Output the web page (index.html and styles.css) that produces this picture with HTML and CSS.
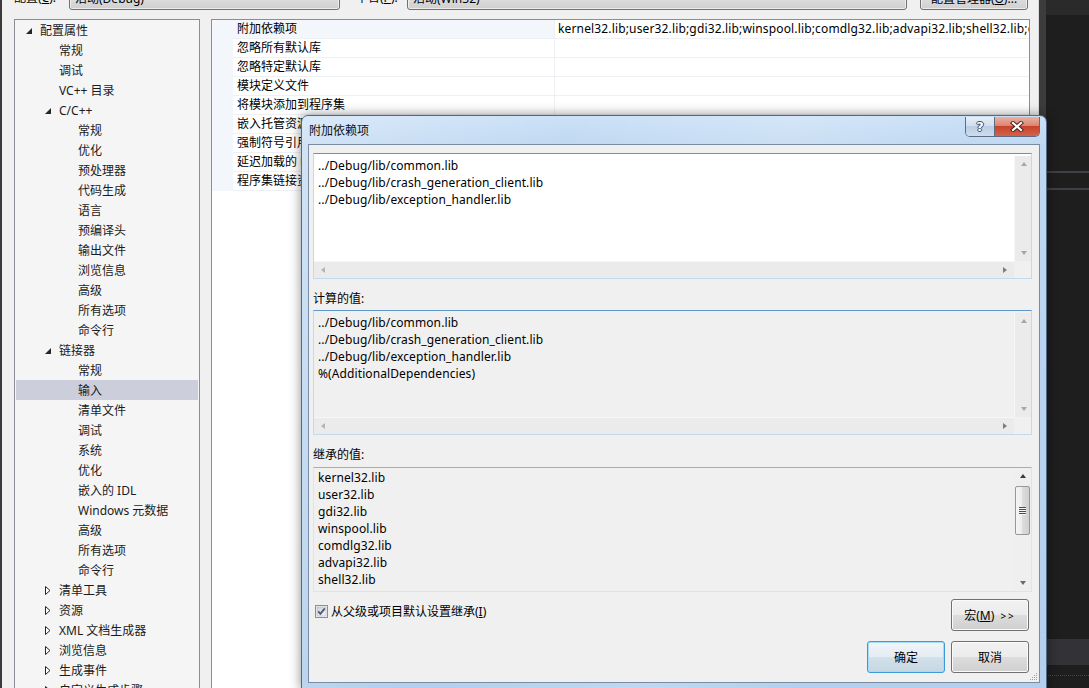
FILE: index.html
```html
<!DOCTYPE html>
<html lang="zh-CN">
<head>
    <meta charset="UTF-8">
    <title>属性页 - 附加依赖项</title>
    <link rel="stylesheet" href="styles.css">
</head>
<body>
<div class="screen">
    <div class="propwin">
        <div class="toolbar">
            <span class="tb-label tb-config">配置(<u>C</u>):</span>
            <div class="combo combo-config">活动(Debug)</div>
            <span class="tb-label tb-platform">平台(<u>P</u>):</span>
            <div class="combo combo-platform">活动(Win32)</div>
            <div class="tb-btn">配置管理器(<u>O</u>)...</div>
        </div>

        <div class="main">
            <ul class="tree">
                <li class="ti l0"><span class="tw"><svg width="6" height="6"><polygon points="6,0 6,6 0,6" fill="#262626"/></svg></span>配置属性</li>
                <li class="ti l1"><span class="tw"></span>常规</li>
                <li class="ti l1"><span class="tw"></span>调试</li>
                <li class="ti l1"><span class="tw"></span>VC++ 目录</li>
                <li class="ti l1"><span class="tw"><svg width="6" height="6"><polygon points="6,0 6,6 0,6" fill="#262626"/></svg></span>C/C++</li>
                <li class="ti l2"><span class="tw"></span>常规</li>
                <li class="ti l2"><span class="tw"></span>优化</li>
                <li class="ti l2"><span class="tw"></span>预处理器</li>
                <li class="ti l2"><span class="tw"></span>代码生成</li>
                <li class="ti l2"><span class="tw"></span>语言</li>
                <li class="ti l2"><span class="tw"></span>预编译头</li>
                <li class="ti l2"><span class="tw"></span>输出文件</li>
                <li class="ti l2"><span class="tw"></span>浏览信息</li>
                <li class="ti l2"><span class="tw"></span>高级</li>
                <li class="ti l2"><span class="tw"></span>所有选项</li>
                <li class="ti l2"><span class="tw"></span>命令行</li>
                <li class="ti l1"><span class="tw"><svg width="6" height="6"><polygon points="6,0 6,6 0,6" fill="#262626"/></svg></span>链接器</li>
                <li class="ti l2"><span class="tw"></span>常规</li>
                <li class="ti l2 sel"><span class="tw"></span>输入</li>
                <li class="ti l2"><span class="tw"></span>清单文件</li>
                <li class="ti l2"><span class="tw"></span>调试</li>
                <li class="ti l2"><span class="tw"></span>系统</li>
                <li class="ti l2"><span class="tw"></span>优化</li>
                <li class="ti l2"><span class="tw"></span>嵌入的 IDL</li>
                <li class="ti l2"><span class="tw"></span>Windows 元数据</li>
                <li class="ti l2"><span class="tw"></span>高级</li>
                <li class="ti l2"><span class="tw"></span>所有选项</li>
                <li class="ti l2"><span class="tw"></span>命令行</li>
                <li class="ti l1"><span class="tw"><svg width="6" height="9"><polygon points="0.5,0.5 5,4.5 0.5,8.5" fill="#fff" stroke="#262626"/></svg></span>清单工具</li>
                <li class="ti l1"><span class="tw"><svg width="6" height="9"><polygon points="0.5,0.5 5,4.5 0.5,8.5" fill="#fff" stroke="#262626"/></svg></span>资源</li>
                <li class="ti l1"><span class="tw"><svg width="6" height="9"><polygon points="0.5,0.5 5,4.5 0.5,8.5" fill="#fff" stroke="#262626"/></svg></span>XML 文档生成器</li>
                <li class="ti l1"><span class="tw"><svg width="6" height="9"><polygon points="0.5,0.5 5,4.5 0.5,8.5" fill="#fff" stroke="#262626"/></svg></span>浏览信息</li>
                <li class="ti l1"><span class="tw"><svg width="6" height="9"><polygon points="0.5,0.5 5,4.5 0.5,8.5" fill="#fff" stroke="#262626"/></svg></span>生成事件</li>
                <li class="ti l1"><span class="tw"><svg width="6" height="9"><polygon points="0.5,0.5 5,4.5 0.5,8.5" fill="#fff" stroke="#262626"/></svg></span>自定义生成步骤</li>
            </ul>

            <div class="grid">
                <div class="row sel"><span class="gut"></span><span class="name">附加依赖项</span><span class="val">kernel32.lib;user32.lib;gdi32.lib;winspool.lib;comdlg32.lib;advapi32.lib;shell32.lib;ole32.lib;oleaut32.lib;uuid.lib;odbc32.lib;odbccp32.lib;%(AdditionalDependencies)</span></div>
                <div class="row"><span class="gut"></span><span class="name">忽略所有默认库</span><span class="val"></span></div>
                <div class="row"><span class="gut"></span><span class="name">忽略特定默认库</span><span class="val"></span></div>
                <div class="row"><span class="gut"></span><span class="name">模块定义文件</span><span class="val"></span></div>
                <div class="row"><span class="gut"></span><span class="name">将模块添加到程序集</span><span class="val"></span></div>
                <div class="row"><span class="gut"></span><span class="name">嵌入托管资源文件</span><span class="val"></span></div>
                <div class="row"><span class="gut"></span><span class="name">强制符号引用</span><span class="val"></span></div>
                <div class="row"><span class="gut"></span><span class="name">延迟加载的 DLL</span><span class="val"></span></div>
                <div class="row"><span class="gut"></span><span class="name">程序集链接资源</span><span class="val"></span></div>
            </div>
        </div>
    </div>

    <div class="dark">
        <div class="d-top"></div>
        <div class="d-line first"></div>
        <div class="d-line second"></div>
        <div class="d-band"></div>
        <div class="d-dots"></div>
    </div>

    <!-- 附加依赖项 dialog -->
    <div class="dialog">
        <div class="dlg-title">
            <span class="dlg-caption">附加依赖项</span>
            <div class="cap-btns">
                <span class="cap-help">?</span>
                <span class="cap-close">
                    <svg width="14" height="11" viewBox="0 0 14 11">
                        <path d="M3 2 L11 9 M11 2 L3 9" stroke="#4a2a24" stroke-width="4.2" stroke-linecap="square"/>
                        <path d="M3 2 L11 9 M11 2 L3 9" stroke="#fff" stroke-width="2.2" stroke-linecap="square"/>
                    </svg>
                </span>
            </div>
        </div>

        <div class="dlg-body">
            <div class="box box-edit">
                <div class="box-text">
                    <div>../Debug/lib/common.lib</div>
                    <div>../Debug/lib/crash_generation_client.lib</div>
                    <div>../Debug/lib/exception_handler.lib</div>
                </div>
                <div class="vscroll">
                    <span class="sb-btn"><i class="arr up"></i></span>
                    <span class="sb-btn"><i class="arr down"></i></span>
                </div>
                <div class="hscroll">
                    <span class="sb-btn"><i class="arr left"></i></span>
                    <span class="sb-btn"><i class="arr right"></i></span>
                </div>
                <div class="corner"></div>
            </div>

            <div class="dlg-label">计算的值:</div>
            <div class="box box-eval">
                <div class="box-text">
                    <div>../Debug/lib/common.lib</div>
                    <div>../Debug/lib/crash_generation_client.lib</div>
                    <div>../Debug/lib/exception_handler.lib</div>
                    <div>%(AdditionalDependencies)</div>
                </div>
                <div class="vscroll">
                    <span class="sb-btn"><i class="arr up"></i></span>
                    <span class="sb-btn"><i class="arr down"></i></span>
                </div>
                <div class="hscroll">
                    <span class="sb-btn"><i class="arr left"></i></span>
                    <span class="sb-btn"><i class="arr right"></i></span>
                </div>
                <div class="corner"></div>
            </div>

            <div class="dlg-label second">继承的值:</div>
            <div class="box box-inherit">
                <div class="box-text">
                    <div>kernel32.lib</div>
                    <div>user32.lib</div>
                    <div>gdi32.lib</div>
                    <div>winspool.lib</div>
                    <div>comdlg32.lib</div>
                    <div>advapi32.lib</div>
                    <div>shell32.lib</div>
                </div>
                <div class="vscroll active">
                    <span class="sb-btn"><i class="arr up"></i></span>
                    <div class="track"><span class="thumb"><i class="grip-lines"></i></span></div>
                    <span class="sb-btn"><i class="arr down"></i></span>
                </div>
            </div>

            <div class="opts">
                <label class="check">
                    <span class="cb">
                        <svg width="13" height="13" viewBox="0 0 13 13">
                            <defs>
                                <linearGradient id="cbg" x1="0" y1="0" x2="1" y2="1">
                                    <stop offset="0" stop-color="#cbcfd5"/>
                                    <stop offset="1" stop-color="#f7f7f7"/>
                                </linearGradient>
                            </defs>
                            <rect x="0.5" y="0.5" width="12" height="12" fill="#f4f4f4" stroke="#8f8f8f"/>
                            <rect x="2" y="2" width="9" height="9" fill="url(#cbg)" stroke="#b4b8bf" stroke-width="0.6"/>
                            <path d="M3.2 6.4 L5.4 8.8 L9.8 3.4" fill="none" stroke="#4a5a7c" stroke-width="1.8"/>
                        </svg>
                    </span>
                    <span class="check-text">从父级或项目默认设置继承(<u>I</u>)</span>
                </label>
                <button class="btn">宏(<u>M</u>) <span class="more">&gt;&gt;</span></button>
            </div>

            <div class="actions">
                <button class="btn btn-default">确定</button>
                <button class="btn">取消</button>
            </div>

            <span class="grip">
                <svg width="10" height="10" viewBox="0 0 10 10">
                    <g fill="#9aa3ad">
                        <rect x="8" y="2" width="1" height="1"/>
                        <rect x="6" y="4" width="1" height="1"/><rect x="8" y="4" width="1" height="1"/>
                        <rect x="4" y="6" width="1" height="1"/><rect x="6" y="6" width="1" height="1"/><rect x="8" y="6" width="1" height="1"/>
                        <rect x="2" y="8" width="1" height="1"/><rect x="4" y="8" width="1" height="1"/><rect x="6" y="8" width="1" height="1"/><rect x="8" y="8" width="1" height="1"/>
                    </g>
                </svg>
            </span>
        </div>
    </div>
</div>
</body>
</html>
```

FILE: styles.css
```css
* {
    margin: 0;
    padding: 0;
    box-sizing: border-box;
}

html, body {
    height: 100%;
    overflow: hidden;
}

body {
    font-family: "Noto Sans", "Noto Sans CJK SC", sans-serif;
    font-size: 12px;
    color: #000;
    background: #1e1e1e;
}

.screen {
    display: flex;
    height: 688px;
    position: relative;
    overflow: hidden;
}

/* ---------- property pages window ---------- */

.propwin {
    flex: none;
    width: 1046px;
    background: #f0f0f0;
    border-left: 2px solid #3a3a3a;
    border-right: 7px solid #3c3c3c;
    box-shadow: inset -1px 0 0 #d9d9d9;
}

.toolbar {
    display: flex;
    height: 19px;
    padding-left: 12px;
}

.toolbar > * {
    flex: none;
    margin-top: -13px;
    height: 23px;
    line-height: 21px;
    white-space: nowrap;
}

.tb-config { width: 55px; }
.tb-platform { width: 51px; margin-left: 16px; }

.combo,
.tb-btn {
    border: 1px solid #707070;
    border-radius: 3px;
    background: linear-gradient(#f2f2f2, #ebebeb 50%, #dddddd 50%, #cfcfcf);
    box-shadow: inset 0 0 0 1px rgba(255,255,255,0.6);
}

.combo { padding-left: 5px; }
.combo-config { width: 271px; }
.combo-platform { width: 500px; }

.tb-btn {
    width: 108px;
    margin-left: 13px;
    text-align: center;
}

.main {
    display: flex;
    align-items: flex-start;
    gap: 11px;
    padding-left: 12px;
}

.tree {
    list-style: none;
    flex: none;
    width: 186px;
    height: 700px;
    background: #f5f5f5;
    border: 1px solid #8a8d93;
}

.ti {
    display: flex;
    align-items: center;
    height: 20px;
    margin: 0 1px;
    white-space: nowrap;
    color: #1b1b1b;
}

.ti .tw {
    flex: none;
    width: 14px;
    height: 20px;
    display: flex;
    align-items: center;
    padding-top: 1px;
}

.ti.l0 { padding-left: 10px; }
.ti.l1 { padding-left: 29px; }
.ti.l2 { padding-left: 48px; }

.ti.sel { background: #cccedb; }

.grid {
    flex: none;
    width: 819px;
    height: 700px;
    background: #fff;
    border: 1px solid #8a8d93;
}

.row {
    display: flex;
    height: 19px;
    line-height: 18px;
    white-space: nowrap;
}

.row .gut {
    flex: none;
    width: 21px;
    background: #f3f6fb;
}

.row .name {
    flex: none;
    width: 322px;
    padding-left: 4px;
    border-bottom: 1px solid #eef0f4;
    border-right: 1px solid #eef0f4;
    overflow: hidden;
}

.row .val {
    flex: 1;
    padding-left: 3px;
    letter-spacing: 0.15px;
    border-bottom: 1px solid #eef0f4;
    overflow: hidden;
}

.row.sel .name { background: #f3f6fb; }

/* ---------- dark area on the right ---------- */

.dark {
    flex: 1;
    display: flex;
    flex-direction: column;
    background: #1e1e1e;
}

.d-top { height: 15px; background: #2a2a2b; }
.d-line { height: 2px; background: #3f3f46; }
.d-line.first { margin-top: 156px; }
.d-line.second { margin-top: 15px; }
.d-band { height: 26px; margin-top: 449px; background: #333337; }
.d-dots { height: 1px; margin-top: 10px; border-top: 1px dotted #45454c; }

/* ---------- dialog ---------- */

.dialog {
    position: absolute;
    left: 301px;
    top: 115px;
    width: 746px;
    height: 575px;
    display: flex;
    flex-direction: column;
    padding: 0 6px 6px;
    border: 1px solid #52698a;
    border-radius: 7px 7px 0 0;
    background:
        linear-gradient(105deg, rgba(255,255,255,0.28) 0%, rgba(255,255,255,0) 30%, rgba(255,255,255,0.18) 55%, rgba(255,255,255,0) 75%),
        linear-gradient(#cbe1f7, #bfd8f1 30px, #b3cfec);
    box-shadow: 0 0 12px rgba(0,0,0,0.45);
}

.dlg-title {
    flex: none;
    display: flex;
    height: 28px;
}

.dlg-caption {
    padding-left: 1px;
    line-height: 30px;
    color: #111;
}

.cap-btns {
    margin-left: auto;
    margin-top: 1px;
    display: flex;
    height: 20px;
    border: 1px solid #5d6c84;
    border-top: none;
    border-radius: 0 0 5px 5px;
    overflow: hidden;
}

.cap-help {
    width: 29px;
    border-right: 1px solid #5d6c84;
    background: linear-gradient(#e6eef8, #d2dfee 45%, #bccde3 50%, #cddcee);
    text-align: center;
    font-family: "DejaVu Sans", sans-serif;
    font-weight: bold;
    font-size: 13px;
    line-height: 19px;
    color: #fff;
    text-shadow: 1px 0 #3b4a63, -1px 0 #3b4a63, 0 1px #3b4a63, 0 -1px #3b4a63;
}

.cap-close {
    width: 44px;
    display: flex;
    align-items: center;
    justify-content: center;
    background: linear-gradient(#eab0a2, #dc8571 45%, #c6432b 50%, #d4634a);
}

.dlg-body {
    flex: 1;
    position: relative;
    display: flex;
    flex-direction: column;
    background: #f0f0f0;
    border: 1px solid #7a8ca5;
    padding: 8px 7px 0 4px;
}

.box {
    flex: none;
    display: grid;
    grid-template-columns: 1fr 17px;
    grid-template-rows: 1fr 17px;
    border: 1px solid #c3d9ec;
    border-top-color: #5d97c9;
}

.box-edit { height: 126px; background: #fff; }
.box-eval { height: 125px; background: #f0f0f0; }

.box-inherit {
    height: 125px;
    background: #f0f0f0;
    grid-template-rows: 1fr;
    border-color: #e3e3e3;
    border-top-color: #abadb3;
    border-left-color: #e2e3ea;
}

.box-text {
    padding: 3px 4px;
    line-height: 17px;
    letter-spacing: 0.1px;
    white-space: nowrap;
    overflow: hidden;
}

.box-inherit .box-text { padding-top: 1px; }

.vscroll {
    display: flex;
    flex-direction: column;
    justify-content: space-between;
    margin-top: 2px;
    background: #ebebeb;
    border-left: 1px solid #f7f7f7;
}

.hscroll {
    display: flex;
    justify-content: space-between;
    background: #ebebeb;
    border-top: 1px solid #f7f7f7;
}

.corner { background: #f0f0f0; }

.sb-btn {
    flex: none;
    width: 17px;
    height: 16px;
    display: flex;
    align-items: center;
    justify-content: center;
}

.hscroll .sb-btn { width: 18px; }

.arr {
    width: 0;
    height: 0;
    border: 0 solid transparent;
}

.arr.up { border-width: 0 3.5px 4px; border-bottom-color: #a6a6a6; }
.arr.down { border-width: 4px 3.5px 0; border-top-color: #a6a6a6; }
.arr.left { border-width: 3.5px 4px 3.5px 0; border-right-color: #b4b4b4; }
.arr.right { border-width: 3.5px 0 3.5px 4px; border-left-color: #7d7d7d; }

.vscroll.active {
    margin-top: 0;
    background: #efefef;
    border-left: none;
}

.vscroll.active .arr.up { border-bottom-color: #3c3c3c; }
.vscroll.active .arr.down { border-top-color: #6a6a6a; }

.track {
    flex: 1;
    padding-top: 2px;
}

.thumb {
    display: flex;
    align-items: center;
    justify-content: center;
    width: 15px;
    height: 49px;
    margin-left: 1px;
    border: 1px solid #979797;
    border-radius: 2px;
    background: linear-gradient(to right, #f5f5f5, #ebebeb 50%, #dcdcdc 50%, #cfcfcf);
}

.grip-lines {
    width: 7px;
    height: 8px;
    background: repeating-linear-gradient(#4d4d4d 0 1px, #f4f4f4 1px 2px);
}

.dlg-label {
    flex: none;
    height: 17px;
    line-height: 17px;
    margin: 11px 0 3px;
}

.dlg-label.second { margin-bottom: 4px; }

.opts {
    flex: none;
    display: flex;
    justify-content: space-between;
    align-items: flex-start;
    margin-top: 7px;
    padding-right: 3px;
}

.check {
    display: flex;
    align-items: center;
    gap: 3px;
    height: 13px;
    margin: 6px 0 0 2px;
    line-height: 13px;
}

.cb {
    display: flex;
    width: 13px;
    height: 13px;
}

.actions {
    flex: none;
    display: flex;
    justify-content: flex-end;
    gap: 6px;
    margin-top: 10px;
    padding-right: 3px;
}

.btn {
    width: 78px;
    height: 32px;
    font: inherit;
    color: #000;
    border: 1px solid #707070;
    border-radius: 3px;
    background: linear-gradient(#f2f2f2, #ebebeb 50%, #dddddd 50%, #cfcfcf);
    box-shadow: inset 0 0 0 1px #fbfbfb;
}

.btn .more {
    font-size: 10px;
    letter-spacing: 2px;
    margin-left: 3px;
}

.btn-default {
    border-color: #3c9ad8;
    background: linear-gradient(#f0f5f8, #e4edf3 50%, #d2e1ea 50%, #c5d7e2);
    box-shadow: inset 0 0 0 1px #a6dcf8;
}

.grip {
    position: absolute;
    right: 1px;
    bottom: 1px;
    display: flex;
}
```
